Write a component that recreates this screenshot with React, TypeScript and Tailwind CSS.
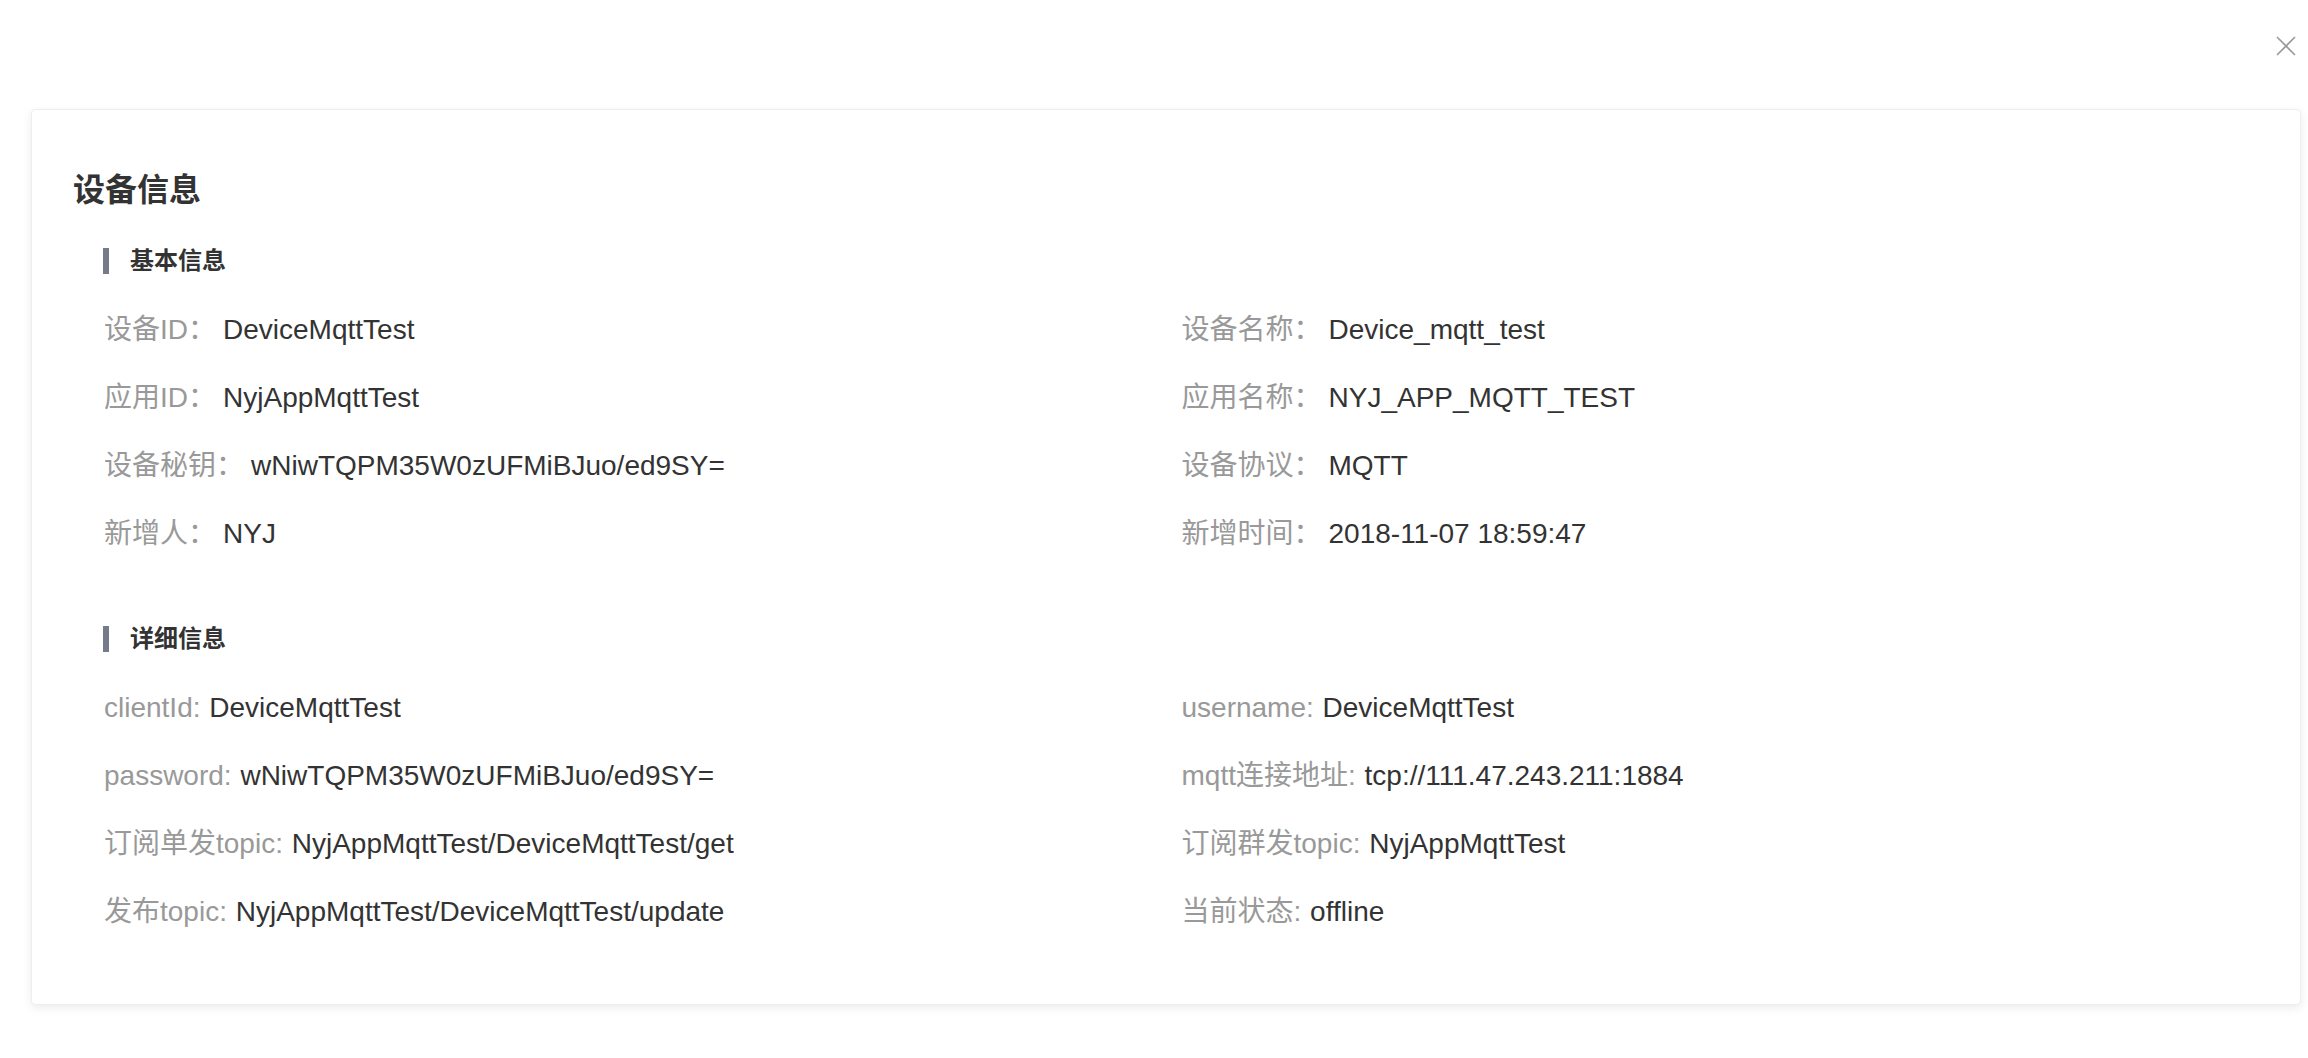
import React from "react";

const basic = [
  { label: "设备ID：", value: "DeviceMqttTest" },
  { label: "设备名称：", value: "Device_mqtt_test" },
  { label: "应用ID：", value: "NyjAppMqttTest" },
  { label: "应用名称：", value: "NYJ_APP_MQTT_TEST" },
  { label: "设备秘钥：", value: "wNiwTQPM35W0zUFMiBJuo/ed9SY=" },
  { label: "设备协议：", value: "MQTT" },
  { label: "新增人：", value: "NYJ" },
  { label: "新增时间：", value: "2018-11-07 18:59:47" },
];

const detail = [
  { label: "clientId:", value: "DeviceMqttTest" },
  { label: "username:", value: "DeviceMqttTest" },
  { label: "password:", value: "wNiwTQPM35W0zUFMiBJuo/ed9SY=" },
  { label: "mqtt连接地址:", value: "tcp://111.47.243.211:1884" },
  { label: "订阅单发topic:", value: "NyjAppMqttTest/DeviceMqttTest/get" },
  { label: "订阅群发topic:", value: "NyjAppMqttTest" },
  { label: "发布topic:", value: "NyjAppMqttTest/DeviceMqttTest/update" },
  { label: "当前状态:", value: "offline" },
];

function SectionHead({ title }: { title: string }) {
  return (
    <div className="flex items-center h-[26px] -ml-px">
      <div className="w-[6px] h-[26px] bg-[#767b8a]" />
      <div className="ml-[21px] text-[24px] leading-[26px] font-bold text-[#333]">
        {title}
      </div>
    </div>
  );
}

export default function App() {
  return (
    <div
      className="w-[2308px] h-[1058px] bg-white overflow-hidden"
      style={{ fontFamily: '"Liberation Sans", "Noto Sans CJK SC", sans-serif' }}
    >
      <div className="flex justify-end pt-[36px] pr-[12px]">
        <button className="w-[20px] h-[20px] text-[#999]">
          <svg viewBox="0 0 20 20" width="20" height="20" fill="none" stroke="currentColor" strokeWidth="1.6">
            <line x1="1" y1="1" x2="19" y2="19" />
            <line x1="19" y1="1" x2="1" y2="19" />
          </svg>
        </button>
      </div>

      <div className="mt-[53px] ml-[31px] mr-[7px] bg-white border border-[#ebeef5] rounded-[4px] shadow-[0_3px_10px_rgba(0,0,0,0.08)] px-[41px] pt-[64px] pb-[58px]">
        <h2 className="text-[32px] leading-[32px] font-bold text-[#333]">设备信息</h2>

        <div className="ml-[31px] mt-[42px]">
          <SectionHead title="基本信息" />
          <div className="grid grid-cols-2 mt-[22px]">
            {basic.map((item, i) => (
              <div key={i} className="h-[68px] flex items-center text-[28px]">
                <span className="text-[#999]">{item.label}</span>
                <span className="ml-[7px] text-[#333]">{item.value}</span>
              </div>
            ))}
          </div>

          <div className="mt-[58px]">
            <SectionHead title="详细信息" />
          </div>
          <div className="grid grid-cols-2 mt-[22px]">
            {detail.map((item, i) => (
              <div key={i} className="h-[68px] flex items-center text-[28px] whitespace-pre">
                <span className="text-[#999]">{item.label} </span>
                <span className="ml-px text-[#333]">{item.value}</span>
              </div>
            ))}
          </div>
        </div>
      </div>
    </div>
  );
}
